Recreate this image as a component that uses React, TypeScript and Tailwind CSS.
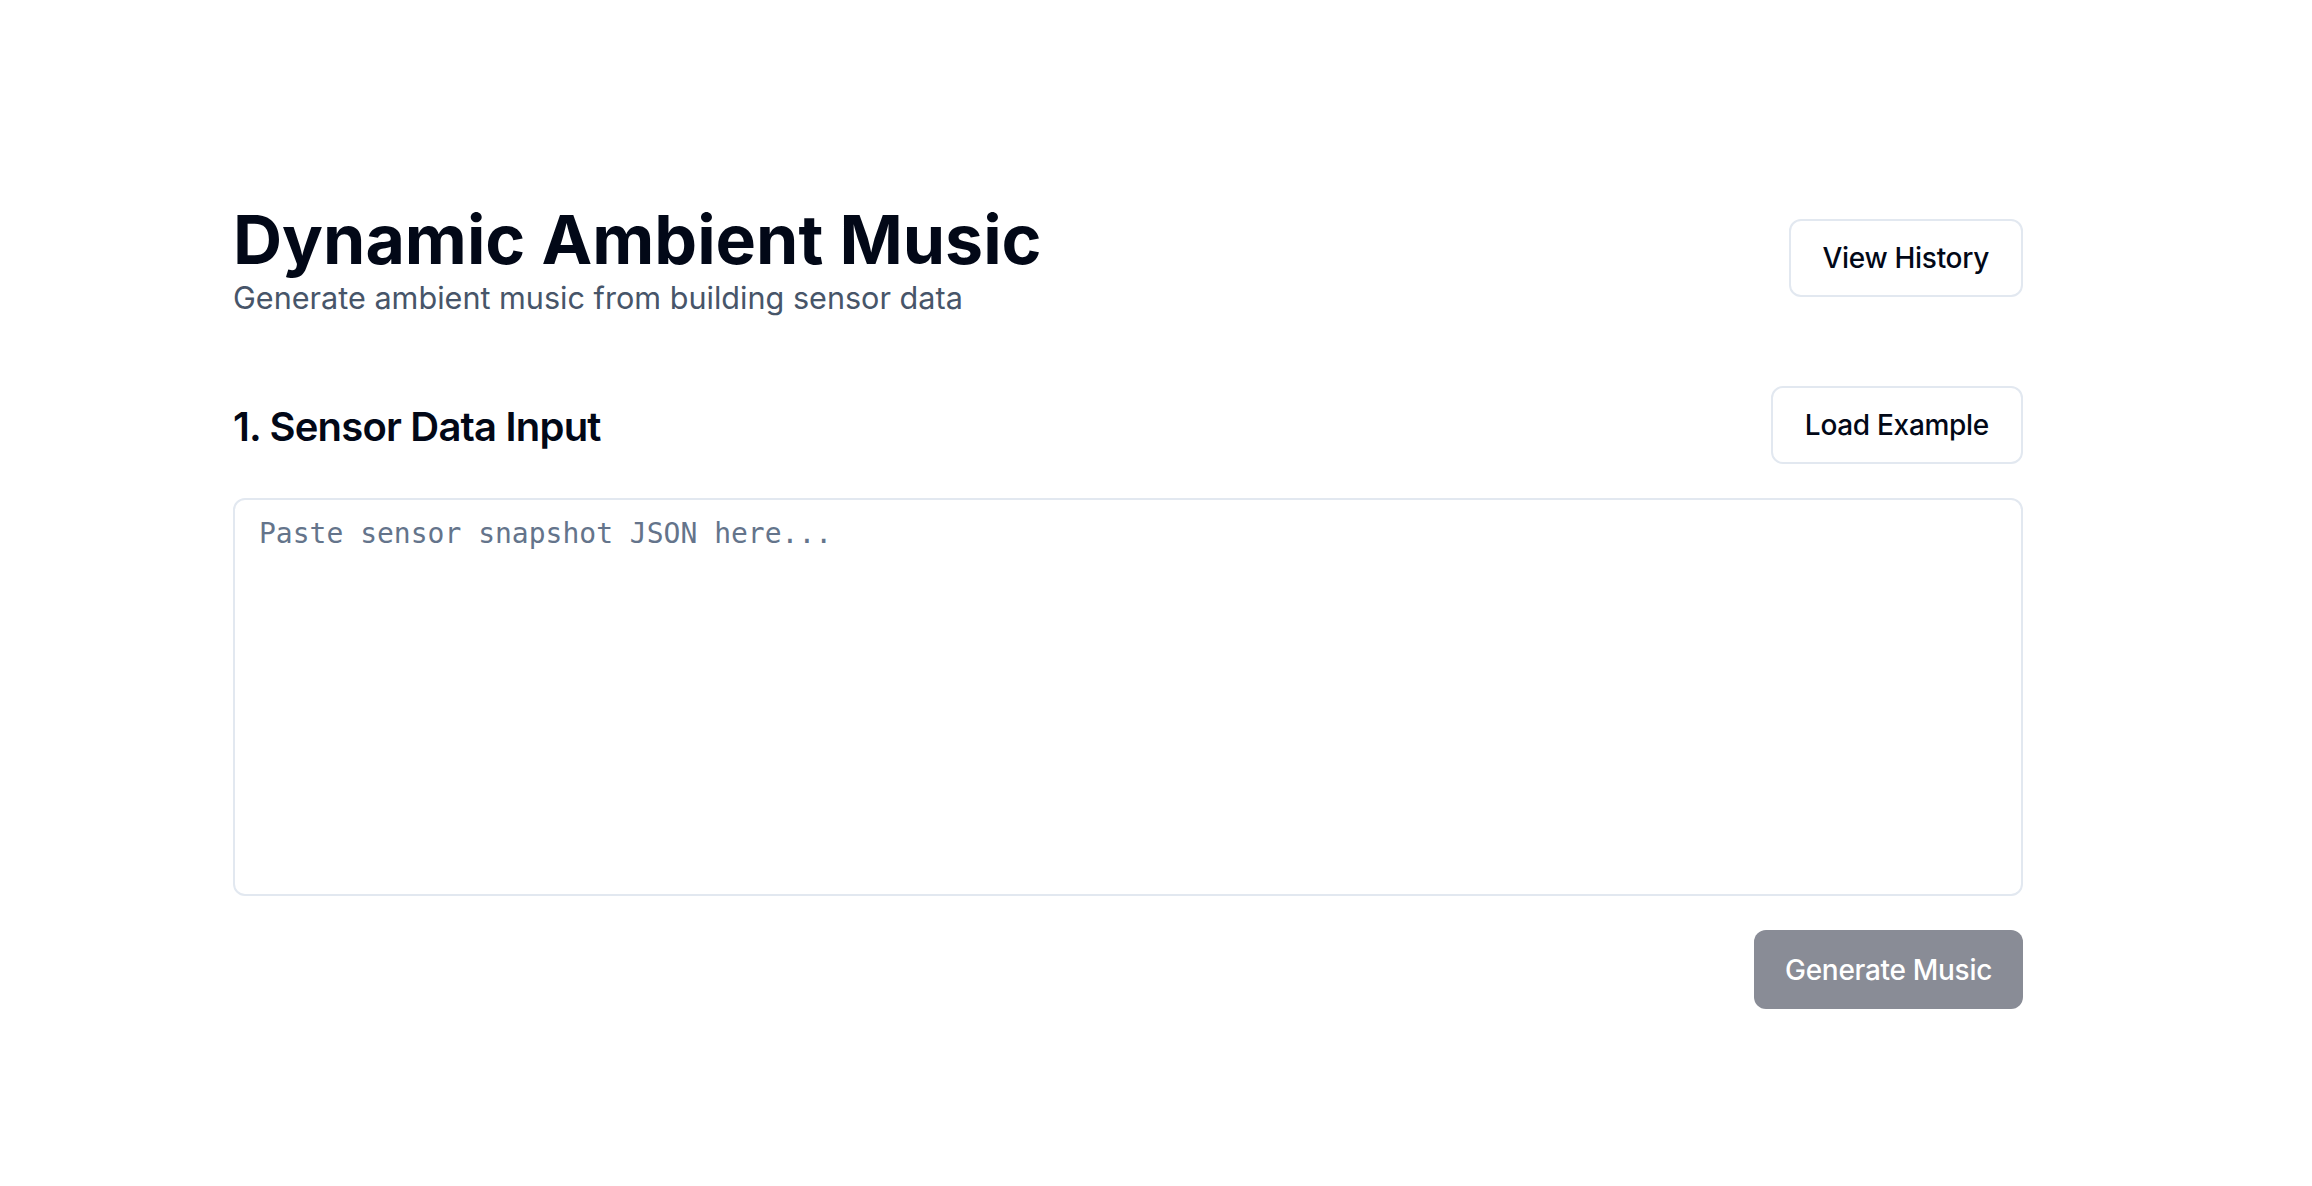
import React from "react";

export default function App() {
  return (
    <div className="min-h-screen bg-white" style={{ fontFamily: "Inter, 'Noto Sans', sans-serif" }}>
      <div className="ml-[233px] w-[1790px] pt-[199px]">
        <div className="flex items-center justify-between">
          <div className="flex flex-col">
            <h1 className="text-[68px] leading-[80px] font-bold tracking-[0px] text-[#020817]">Dynamic Ambient Music</h1>
            <p className="text-[30.6px] leading-[38px] text-[#475569]">Generate ambient music from building sensor data</p>
          </div>
          <button className="h-[78px] px-[32px] rounded-[12px] border-2 border-[#e2e8f0] bg-white text-[28px] font-medium tracking-[-0.3px] text-[#020817]">
            View History
          </button>
        </div>
        <div className="mt-[69px] flex items-center justify-between">
          <h2 className="pt-[4px] text-[40px] leading-[56px] font-semibold tracking-[-0.8px] text-[#020817]">1. Sensor Data Input</h2>
          <button className="h-[78px] px-[32px] rounded-[12px] border-2 border-[#e2e8f0] bg-white text-[28px] font-medium tracking-[-0.3px] text-[#020817]">
            Load Example
          </button>
        </div>
        <textarea
          className="mt-[34px] block w-full h-[398px] resize-none rounded-[12px] border-2 border-[#e2e8f0] px-[24px] py-[14px] text-[28px] leading-[40px] text-[#020817] placeholder:text-[#64748b] outline-none"
          style={{ fontFamily: "'DejaVu Sans Mono', monospace" }}
          placeholder="Paste sensor snapshot JSON here..."
        />
        <div className="mt-[34px] flex justify-end">
          <button className="h-[79px] px-[31px] rounded-[12px] bg-[#898c96] text-[28px] font-medium tracking-[-0.3px] text-white">
            Generate Music
          </button>
        </div>
      </div>
    </div>
  );
}
